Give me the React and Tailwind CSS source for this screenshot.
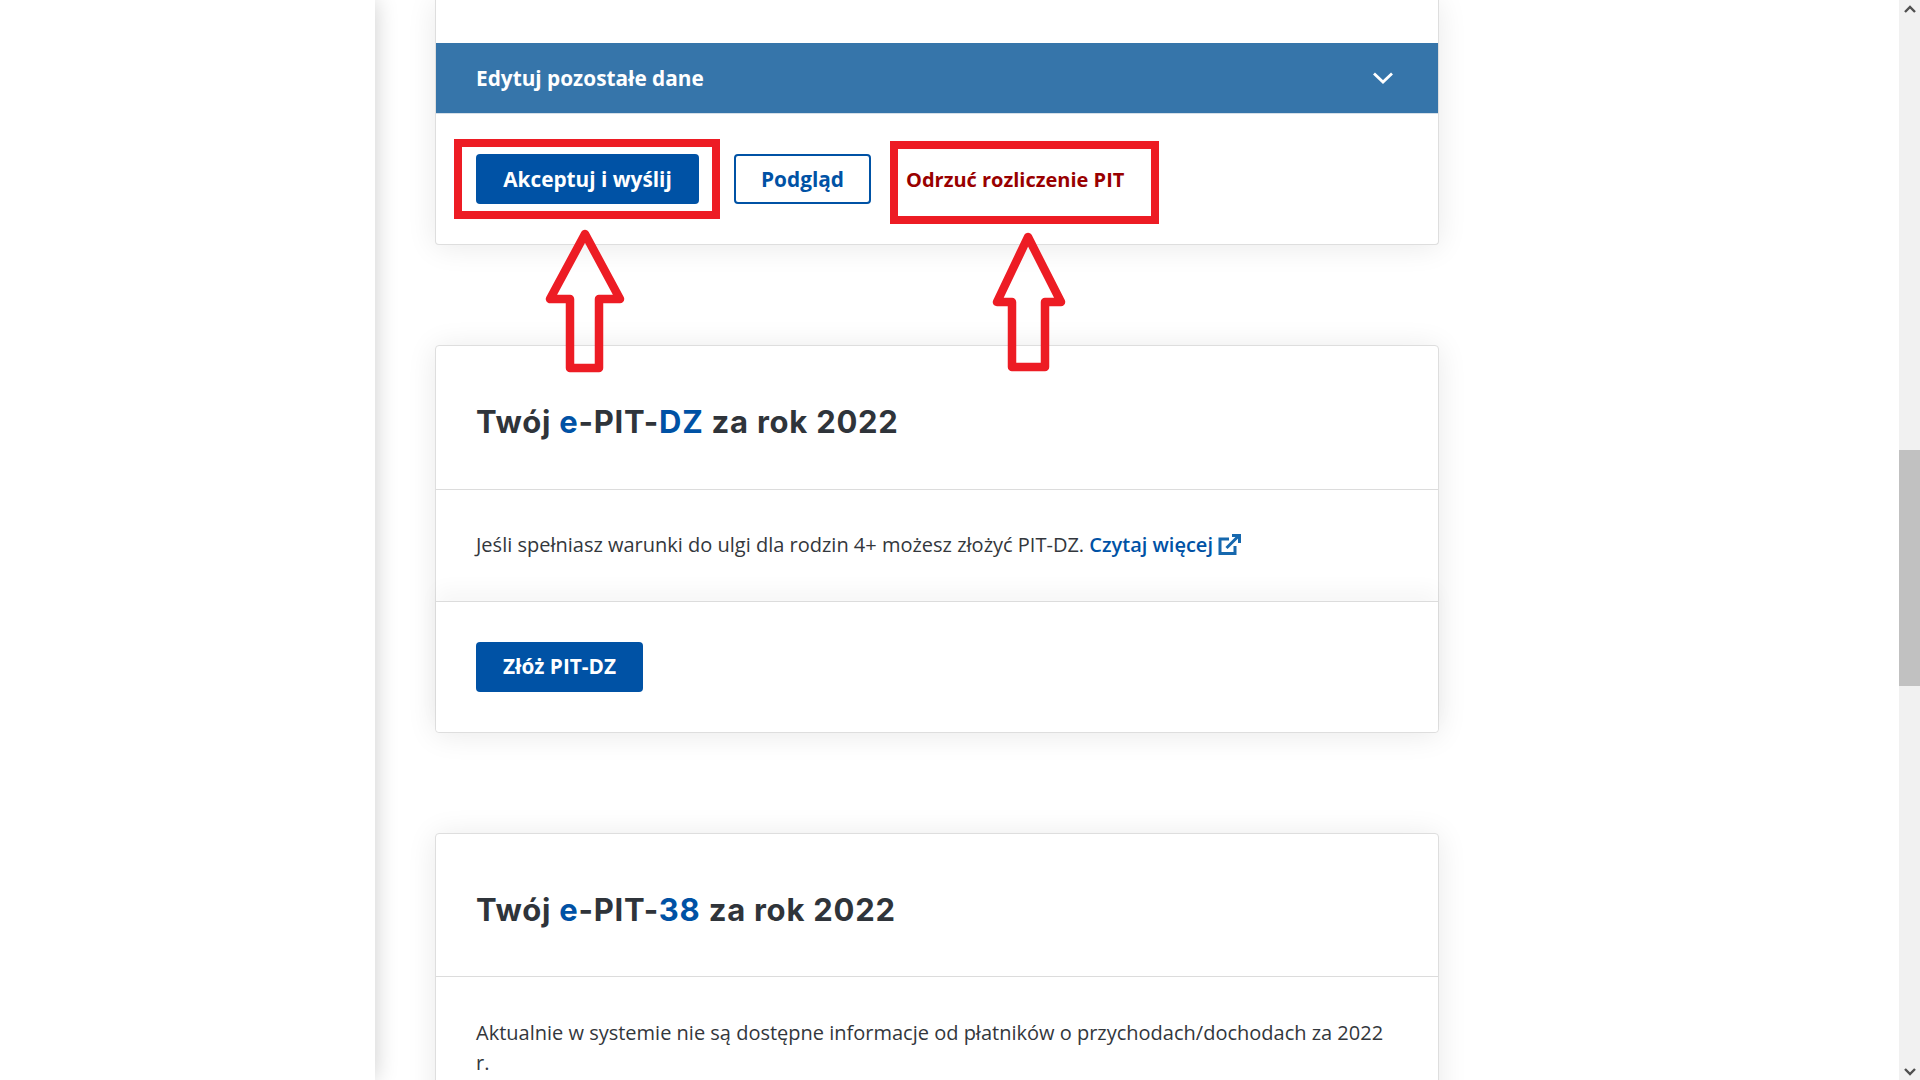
const Arrow = ({ className, width, height, points }) => (
  <svg className={className} width={width} height={height} viewBox={`0 0 ${width} ${height}`} fill="none">
    <polygon points={points} stroke="#ed1c24" strokeWidth="8.5" strokeLinejoin="round" />
  </svg>
);

const Heading = ({ code }) => (
  <h2 className="font-['Inter',sans-serif] text-[31px] leading-[40px] font-bold tracking-[0.75px] text-[#2f343a]">
    Twój <span className="text-[#0052a5]">e</span>-PIT-<span className="text-[#0052a5]">{code}</span> za rok 2022
  </h2>
);

const ActionRow = ({ children, className }) => (
  <div className={`relative bg-white border-t border-[#dcdcdc] shadow-[0_-12px_20px_rgba(0,0,0,0.035)] ${className}`}>
    {children}
  </div>
);

const Card = ({ children, className }) => (
  <section className={`w-[1004px] bg-white border border-[#dedede] rounded-[4px] shadow-[0_2px_30px_rgba(0,0,0,0.09)] ${className}`}>
    {children}
  </section>
);

const ScrollArrow = ({ d }) => (
  <div className="h-[17px] flex items-center justify-center">
    <svg width="12" height="8" viewBox="0 0 12 8" fill="none">
      <path d={d} stroke="#505050" strokeWidth="2.4" />
    </svg>
  </div>
);

export default function App() {
  return (
    <div className="relative flex h-screen overflow-hidden bg-white font-['Open_Sans',sans-serif]">
      <aside className="relative z-10 w-[375px] shrink-0 bg-white shadow-[0_0_22px_rgba(0,0,0,0.2)]" />

      <main className="flex-1 pl-[60px]">
        {/* Pierwsza karta */}
        <Card className="border-t-0 rounded-t-none pt-[43px] w-[1003px]">
          <div className="h-[71px] bg-[#3675aa] border-b border-[#d5dfe8] pl-10 pr-[44px] flex items-center justify-between">
            <span className="pt-px text-[20.8px] font-bold text-white">Edytuj pozostałe dane</span>
            <svg width="22" height="14" viewBox="0 0 22 14" fill="none">
              <path d="M2 2.5 L11 11 L20 2.5" stroke="#fff" strokeWidth="2.8" />
            </svg>
          </div>
          <div className="flex items-center pl-10 pt-10 pb-10">
            <button className="h-[50px] w-[223px] pt-px rounded-[4px] bg-[#0052a5] text-white text-[20.8px] font-bold">
              Akceptuj i wyślij
            </button>
            <button className="ml-[35px] h-[50px] w-[137px] pt-px rounded-[4px] border-2 border-[#0052a5] text-[#0052a5] text-[20.8px] font-bold">
              Podgląd
            </button>
            <button className="ml-[35px] pt-px text-[#990000] text-[20px] font-bold">Odrzuć rozliczenie PIT</button>
          </div>
        </Card>

        {/* e-PIT-DZ */}
        <Card className="mt-[100px]">
          <div className="h-[143px] pl-10 pt-[56px]">
            <Heading code="DZ" />
          </div>
          <div className="h-[112px] pl-10 pb-[2px] border-t border-[#dcdcdc] flex items-center text-[20px] text-[#33373c]">
            <span>Jeśli spełniasz warunki do ulgi dla rodzin 4+ możesz złożyć PIT-DZ.&nbsp;</span>
            <a className="font-semibold text-[#0052a5] flex items-center gap-[5px]">
              Czytaj więcej
              <svg width="23" height="22" viewBox="0 0 23 22" fill="none" stroke="#1668ae" strokeWidth="3">
                <path d="M17 12v7.5H2V5h9" />
                <path d="M8.5 14 L20 2.5" />
                <path d="M14 1.5h7.5V9" />
              </svg>
            </a>
          </div>
          <ActionRow className="pl-10 py-10 rounded-b-[4px]">
            <button className="h-[50px] w-[167px] rounded-[4px] bg-[#0052a5] text-white text-[20.8px] font-bold">
              Złóż PIT-DZ
            </button>
          </ActionRow>
        </Card>

        {/* e-PIT-38 */}
        <Card className="mt-[100px]">
          <div className="h-[142px] pl-10 pt-[56px]">
            <Heading code="38" />
          </div>
          <div className="pl-10 pr-10 pt-[41px] pb-10 border-t border-[#dcdcdc] text-[20px] leading-[30px] text-[#33373c]">
            Aktualnie w systemie nie są dostępne informacje od płatników o przychodach/dochodach za 2022 r.
          </div>
        </Card>
      </main>

      <div className="w-[21px] shrink-0 bg-[#f1f1f1] flex flex-col">
        <ScrollArrow d="M1 7 L6 2 L11 7" />
        <div className="mt-[433px] h-[236px] bg-[#c1c1c1]" />
        <div className="flex-1" />
        <ScrollArrow d="M1 1 L6 6 L11 1" />
      </div>

      {/* czerwone oznaczenia na zrzucie */}
      <div className="absolute left-[454px] top-[139px] w-[266px] h-[80px] border-[8px] border-[#ed1c24]" />
      <div className="absolute left-[890px] top-[141px] w-[269px] h-[83px] border-[8px] border-[#ed1c24]" />
      <Arrow
        className="absolute left-[540px] top-[225px]"
        width="90"
        height="150"
        points="45,9 10,74 30,74 30,143 59,143 59,74 80,74"
      />
      <Arrow
        className="absolute left-[985px] top-[228px]"
        width="90"
        height="146"
        points="43,9 12,74 27,74 27,139 60,139 60,74 76,74"
      />
    </div>
  );
}
